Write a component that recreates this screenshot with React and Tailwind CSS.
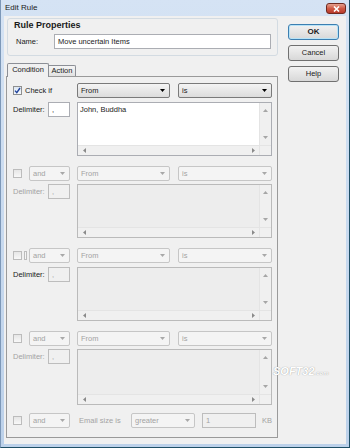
import clsx from "clsx";

function Tri({ dir, className }) {
  const pts = {
    down: "0,0 5,0 2.5,3",
    up: "0,3 5,3 2.5,0",
    left: "3,0 3,5 0,2.5",
    right: "0,0 0,5 3,2.5",
  }[dir];
  const vert = dir === "up" || dir === "down";
  return (
    <svg width={vert ? 5 : 3} height={vert ? 3 : 5} className={className}>
      <polygon points={pts} />
    </svg>
  );
}

function Check({ on, checked }) {
  return (
    <div
      className={clsx(
        "w-[9px] h-[9px] border flex items-center justify-center shrink-0",
        on
          ? "border-[#8e8f8f] bg-linear-to-b from-[#dbe6f3] to-[#f6f9fc]"
          : "border-[#bcbcbc] bg-linear-to-b from-[#e6e6e6] to-[#f8f8f8]"
      )}
    >
      {checked && (
        <svg width="7" height="7" viewBox="0 0 7 7">
          <path d="M1 3.6 L2.8 5.6 L6 1" fill="none" stroke="#21439c" strokeWidth="1.4" />
        </svg>
      )}
    </div>
  );
}

function Dropdown({ text, w, on }) {
  return (
    <div
      className={clsx(
        "h-[15px] flex items-center justify-between pl-[3px] pr-[4px] rounded-[2px] border shrink-0",
        on
          ? "border-[#7a7a7a] bg-linear-to-b from-[#f4f4f4] to-[#dcdcdc] text-[#1a1a1a]"
          : "border-[#c6c6c6] bg-[#f4f4f4] text-[#a3a3a3]",
        w
      )}
    >
      <span>{text}</span>
      <Tri dir="down" className={on ? "fill-black" : "fill-[#a8a8a8]"} />
    </div>
  );
}

function Field({ text, w, on }) {
  return (
    <div
      className={clsx(
        "h-[15px] flex items-center pl-[3px] border shrink-0",
        on ? "border-[#abadb3] bg-white text-[#1a1a1a]" : "border-[#bdbdbd] bg-[#f0f0f0] text-[#a3a3a3]",
        w
      )}
    >
      {text}
    </div>
  );
}

function ListBox({ on, h, text }) {
  return (
    <div
      className={clsx(
        "w-[195px] border flex flex-col",
        h,
        on ? "border-[#abadb3] bg-white" : "border-[#bababa] bg-[#ededed]"
      )}
    >
      <div className="flex flex-1 min-h-0">
        <div className="flex-1 pl-[2px] pt-[3px]">{text}</div>
        <div className="w-[12px] flex flex-col justify-between items-center bg-[#f0f0f0] border-l border-[#e4e4e4] py-[6px]">
          <Tri dir="up" className="fill-[#a6a6a6]" />
          <Tri dir="down" className="fill-[#a6a6a6]" />
        </div>
      </div>
      <div className="h-[10px] flex items-center bg-[#f0f0f0] border-t border-[#e4e4e4]">
        <div className="w-[12px] flex justify-center">
          <Tri dir="left" className="fill-[#8a8a8a]" />
        </div>
        <div className="flex-1" />
        <div className="w-[12px] flex justify-center">
          <Tri dir="right" className="fill-[#8a8a8a]" />
        </div>
        <div className="w-[12px] h-full border-l border-[#e4e4e4]" />
      </div>
    </div>
  );
}

function ConditionBlock({ extra, labelOn, h, mt, gap }) {
  return (
    <div className={mt}>
      <div className="flex items-center h-[15px]">
        <div className="w-[57px] flex items-center">
          <Check />
          {extra && <div className="ml-[2px] w-[3px] h-[9px] border border-[#bcbcbc] bg-[#f4f4f4]" />}
          <div className="ml-auto">
            <Dropdown text="and" w="w-[41px]" />
          </div>
        </div>
        <div className="ml-[7px] flex gap-[8px]">
          <Dropdown text="From" w="w-[93px]" />
          <Dropdown text="is" w="w-[94px]" />
        </div>
      </div>
      <div className={clsx("flex items-start", gap)}>
        <div className="w-[57px] h-[15px] flex items-center">
          <span className={labelOn ? "text-[#1a1a1a]" : "text-[#a3a3a3]"}>Delimiter:</span>
          <div className="ml-auto">
            <Field text="," w="w-[22px]" />
          </div>
        </div>
        <div className="ml-[7px]">
          <ListBox h={h} />
        </div>
      </div>
    </div>
  );
}

function Button({ children, def }) {
  return (
    <div
      className={clsx(
        "h-[16px] w-[51px] rounded-[3px] border flex items-center justify-center bg-linear-to-b from-[#f2f2f2] to-[#d8d8d8]",
        def ? "border-[#3c7fb1] font-bold text-[8px] shadow-[inset_0_0_0_1px_#b8e3f7]" : "border-[#707070]"
      )}
    >
      {children}
    </div>
  );
}

export default function App() {
  return (
    <div className="w-[350px] h-[448px] flex flex-col bg-linear-to-b from-[#d5e3f4] to-[#bcd1ea] border-l border-l-[#7d98b8] border-r border-b border-[#1f4f66] overflow-hidden relative font-['Liberation_Sans',Arial,sans-serif] text-[7.5px] leading-none text-[#1a1a1a]">
      <div className="h-[16px] flex items-start shrink-0">
        <span className="pl-[4px] pt-[4px] text-[8px] text-[#1b1b1b]">Edit Rule</span>
        <div className="ml-auto mr-[3px] mt-[3px] w-[20px] h-[11px] rounded-[3px] border border-[#6f2a20] bg-linear-to-b from-[#e4a08f] via-[#cf5a45] to-[#b8392a] flex items-center justify-center">
          <svg width="7" height="6" viewBox="0 0 7 6">
            <path d="M1 0.5 L6 5.5 M6 0.5 L1 5.5" stroke="white" strokeWidth="1.6" />
          </svg>
        </div>
      </div>

      <div className="flex-1 ml-[3px] mr-[3px] mb-[3px] bg-[#f0f0f0] flex">
        <div className="w-[272px] ml-[2px] pt-[2px] flex flex-col">
          <div className="ml-[1px] h-[38px] rounded-[3px] border border-[#d3dbe2] pt-[2px] pl-[6px]">
            <div className="h-[10px] font-bold text-[9px]">Rule Properties</div>
            <div className="mt-[3px] flex items-center">
              <span className="pl-[2px] w-[40px]">Name:</span>
              <Field text="Move uncertain Items" w="w-[217px]" on />
            </div>
          </div>

          <div className="mt-[7px] flex items-end pl-[1px]">
            <div className="relative z-10 -mb-px h-[14px] w-[42px] border border-b-0 border-[#8c8f96] bg-[#f0f0f0] rounded-t-[2px] flex items-center justify-center pb-[1px]">
              Condition
            </div>
            <div className="h-[11px] w-[27px] border border-l-0 border-b-0 border-[#8c8f96] bg-linear-to-b from-[#f5f5f5] to-[#e2e2e2] rounded-tr-[2px] flex items-center justify-center">
              Action
            </div>
          </div>

          <div className="h-[362px] border border-[#9a9a9a] bg-[#f0f0f0] pt-[6px] pl-[6px] pr-[5px]">
            <div className="flex items-center h-[15px]">
              <div className="w-[57px] flex items-center">
                <Check on checked />
                <span className="ml-[3px]">Check if</span>
              </div>
              <div className="ml-[7px] flex gap-[8px]">
                <Dropdown text="From" w="w-[93px]" on />
                <Dropdown text="is" w="w-[94px]" on />
              </div>
            </div>
            <div className="flex items-start mt-[4px]">
              <div className="w-[57px] h-[15px] flex items-center">
                <span>Delimiter:</span>
                <div className="ml-auto">
                  <Field text="," w="w-[22px]" on />
                </div>
              </div>
              <div className="ml-[7px]">
                <ListBox on h="h-[54px]" text="John, Buddha" />
              </div>
            </div>

            <ConditionBlock mt="mt-[10px]" gap="mt-[3px]" h="h-[54px]" />
            <ConditionBlock mt="mt-[10px]" gap="mt-[4px]" h="h-[54px]" extra labelOn />
            <ConditionBlock mt="mt-[10px]" gap="mt-[3px]" h="h-[56px]" />

            <div className="mt-[8px] flex items-center h-[15px]">
              <div className="w-[57px] flex items-center">
                <Check />
                <div className="ml-auto">
                  <Dropdown text="and" w="w-[41px]" />
                </div>
              </div>
              <div className="ml-[7px] flex items-center">
                <span className="w-[54px] pl-[2px] text-[#a3a3a3]">Email size is</span>
                <Dropdown text="greater" w="w-[64px]" />
                <div className="ml-[7px]">
                  <Field text="1" w="w-[54px]" />
                </div>
                <span className="ml-[6px] text-[#a3a3a3]">KB</span>
              </div>
            </div>
          </div>
        </div>

        <div className="ml-[10px] pt-[8px] flex flex-col gap-[5px]">
          <Button def>OK</Button>
          <Button>Cancel</Button>
          <Button>Help</Button>
        </div>
      </div>

      <div className="absolute left-[272px] top-[366px] flex items-baseline italic font-black text-white [text-shadow:0_0_1px_#8a8a8a]">
        <span className="text-[11px]">SOFT32</span>
        <span className="text-[6px]">.com</span>
      </div>
    </div>
  );
}
